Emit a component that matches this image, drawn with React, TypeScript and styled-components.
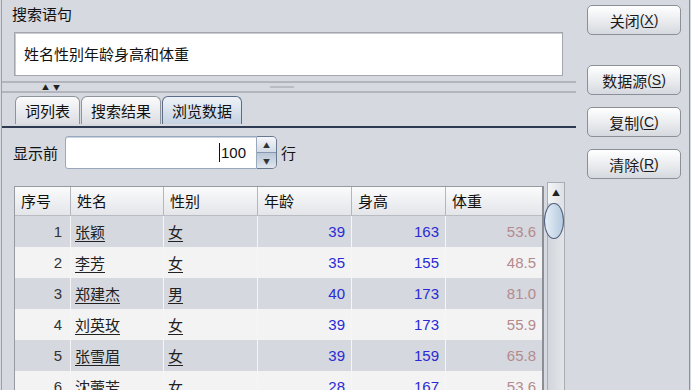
import React from 'react';
import styled, { createGlobalStyle } from 'styled-components';

const cjk = `"Noto Sans CJK SC", "Liberation Sans", sans-serif`;
const latin = `"Liberation Sans", "Noto Sans CJK SC", sans-serif`;

const GlobalStyle = createGlobalStyle`
  html, body {
    margin: 0;
    padding: 0;
    background: #d6d9df;
  }
  body {
    font-family: ${cjk};
    color: #111;
  }
`;

type Person = {
  id: number;
  name: string;
  sex: string;
  age: number;
  height: number;
  weight: string;
};

const rows: Person[] = [
  { id: 1, name: '张颖', sex: '女', age: 39, height: 163, weight: '53.6' },
  { id: 2, name: '李芳', sex: '女', age: 35, height: 155, weight: '48.5' },
  { id: 3, name: '郑建杰', sex: '男', age: 40, height: 173, weight: '81.0' },
  { id: 4, name: '刘英玫', sex: '女', age: 39, height: 173, weight: '55.9' },
  { id: 5, name: '张雪眉', sex: '女', age: 39, height: 159, weight: '65.8' },
  { id: 6, name: '沈蕾芳', sex: '女', age: 28, height: 167, weight: '53.6' },
];

const columns = ['序号', '姓名', '性别', '年龄', '身高', '体重'];

const App = () => {
  return (
    <Frame>
      <GlobalStyle />
      <LeftPane>
        <SearchSection>
          <SectionLabel>搜索语句</SectionLabel>
          <QueryBox>姓名性别年龄身高和体重</QueryBox>
        </SearchSection>
        <Splitter>
          <SplitArrows>
            <span>▲</span>
            <span>▼</span>
          </SplitArrows>
          <SplitGrip />
        </Splitter>
        <TabBar>
          <Tab>词列表</Tab>
          <Tab>搜索结果</Tab>
          <Tab $active>浏览数据</Tab>
        </TabBar>
        <TabRule />
        <TabBody>
          <SpinnerRow>
            <FieldLabel>显示前</FieldLabel>
            <SpinnerField>
              <SpinnerValue>
                <Caret />
                100
              </SpinnerValue>
            </SpinnerField>
            <SpinnerButtons>
              <SpinButton>▲</SpinButton>
              <SpinButton $down>▼</SpinButton>
            </SpinnerButtons>
            <FieldLabel>行</FieldLabel>
          </SpinnerRow>
          <TableArea>
            <DataTable>
              <HeaderRow>
                {columns.map((c) => (
                  <HeaderCell key={c}>{c}</HeaderCell>
                ))}
              </HeaderRow>
              {rows.map((r, i) => (
                <DataRow key={r.id} $odd={i % 2 === 0}>
                  <NumCell>{r.id}</NumCell>
                  <LinkCell>{r.name}</LinkCell>
                  <LinkCell>{r.sex}</LinkCell>
                  <NumCell $color="#2a2ad6">{r.age}</NumCell>
                  <NumCell $color="#2a2ad6">{r.height}</NumCell>
                  <NumCell $color="#b48a8e">{r.weight}</NumCell>
                </DataRow>
              ))}
            </DataTable>
            <ScrollBar>
              <ScrollUp>▲</ScrollUp>
              <ScrollThumb />
            </ScrollBar>
          </TableArea>
        </TabBody>
      </LeftPane>
      <RightPane>
        <ActionButton>
          关闭<Key>(<u>X</u>)</Key>
        </ActionButton>
        <ActionButton $gap={30}>
          数据源<Key>(<u>S</u>)</Key>
        </ActionButton>
        <ActionButton>
          复制<Key>(<u>C</u>)</Key>
        </ActionButton>
        <ActionButton>
          清除<Key>(<u>R</u>)</Key>
        </ActionButton>
      </RightPane>
    </Frame>
  );
};

export default App;

const Frame = styled.div`
  display: flex;
  width: 691px;
  height: 390px;
  overflow: hidden;
  background: #d6d9df;
`;

const LeftPane = styled.div`
  width: 574px;
  margin-left: 1px;
  border-left: 1px solid #9c9fa6;
  display: flex;
  flex-direction: column;
`;

const SearchSection = styled.div`
  padding: 5px 0 0 10px;
`;

const SectionLabel = styled.div`
  font-size: 15px;
  line-height: 18px;
`;

const QueryBox = styled.div`
  margin-top: 9px;
  margin-left: 2px;
  width: 549px;
  height: 44px;
  box-sizing: border-box;
  background: #ffffff;
  border: 1px solid #a3a6ad;
  box-shadow: inset 1px 1px 0 #c9cbd0;
  padding: 0 9px;
  font-size: 15px;
  line-height: 42px;
`;

const Splitter = styled.div`
  margin-top: 5px;
  height: 9px;
  border-top: 2px solid #b2b5bb;
  border-bottom: 2px solid #b2b5bb;
  display: flex;
  align-items: center;
`;

const SplitArrows = styled.div`
  display: flex;
  gap: 4px;
  margin-left: 40px;
  font-size: 7px;
  line-height: 8px;
  color: #222;
`;

const SplitGrip = styled.div`
  margin-left: 210px;
  width: 24px;
  height: 2px;
  background: #b9bcc2;
`;

const TabBar = styled.div`
  display: flex;
  gap: 1px;
  margin-top: 3px;
  padding-left: 13px;
  height: 28px;
  align-items: flex-end;
`;

const Tab = styled.div<{ $active?: boolean }>`
  height: 28px;
  box-sizing: border-box;
  padding: 0 9px;
  font-size: 15px;
  line-height: 27px;
  border: 1px solid ${(p) => (p.$active ? '#5b6c88' : '#8f939b')};
  border-bottom: none;
  border-radius: 6px 6px 0 0;
  background: ${(p) =>
    p.$active
      ? 'linear-gradient(#eef2f7, #c4d2e2)'
      : 'linear-gradient(#fbfbfc, #dcdee3)'};
`;

const TabRule = styled.div`
  height: 2px;
  margin-top: 2px;
  background: #bccbdd;
  border-top: 1px solid #2e3a52;
  border-bottom: 1px solid #2e3a52;
`;

const TabBody = styled.div`
  padding: 8px 0 0 11px;
  display: flex;
  flex-direction: column;
`;

const SpinnerRow = styled.div`
  display: flex;
  align-items: center;
  height: 33px;
`;

const FieldLabel = styled.span`
  font-size: 15px;
  margin-right: 7px;
  &:last-child {
    margin-left: 4px;
  }
`;

const SpinnerField = styled.div`
  width: 192px;
  height: 33px;
  box-sizing: border-box;
  background: #fff;
  border: 1px solid #9aa8bc;
  border-radius: 3px 0 0 3px;
  box-shadow: inset 0 1px 0 #c7d3e3;
  display: flex;
  align-items: center;
  justify-content: flex-end;
  padding-right: 10px;
`;

const SpinnerValue = styled.span`
  font-family: ${latin};
  font-size: 15px;
  display: flex;
  align-items: center;
`;

const Caret = styled.span`
  width: 1px;
  height: 19px;
  background: #111;
  margin-right: 1px;
`;

const SpinnerButtons = styled.div`
  width: 20px;
  height: 33px;
  box-sizing: border-box;
  border: 1px solid #69778f;
  border-left: none;
  border-radius: 0 5px 5px 0;
  display: flex;
  flex-direction: column;
  overflow: hidden;
`;

const SpinButton = styled.div<{ $down?: boolean }>`
  flex: 1;
  font-size: 7px;
  display: flex;
  align-items: center;
  justify-content: center;
  color: #333;
  background: ${(p) =>
    p.$down ? 'linear-gradient(#b8c6d8, #dfe6ef)' : 'linear-gradient(#f5f7fa, #d2dbe6)'};
  ${(p) => (p.$down ? 'border-top: 1px solid #8797ae;' : '')}
`;

const TableArea = styled.div`
  display: flex;
  align-items: flex-start;
  margin-top: 13px;
  margin-left: 1px;
`;

const DataTable = styled.div`
  width: 530px;
  box-sizing: border-box;
  border: 1px solid #979aa1;
  border-right: 2px solid #8b8e95;
  border-bottom: none;
  margin-top: 4px;
`;

const gridCols = '56px 93px 94px 94px 94px 96px';

const HeaderRow = styled.div`
  display: grid;
  grid-template-columns: ${gridCols};
  height: 28px;
  background: linear-gradient(#fbfbfc, #e3e5e9);
  border-bottom: 1px solid #b9bcc2;
`;

const HeaderCell = styled.div`
  font-size: 15px;
  line-height: 28px;
  padding-left: 6px;
  border-right: 1px solid #b3b6bc;
  &:last-child {
    border-right: none;
  }
`;

const DataRow = styled.div<{ $odd: boolean }>`
  display: grid;
  grid-template-columns: ${gridCols};
  height: 31px;
  background: ${(p) => (p.$odd ? '#d5d8de' : '#f3f3f4')};
`;

const Cell = styled.div`
  font-size: 15px;
  line-height: 31px;
  border-right: 1px solid #f6f6f7;
  white-space: nowrap;
  overflow: hidden;
  &:last-child {
    border-right: none;
  }
`;

const NumCell = styled(Cell)<{ $color?: string }>`
  font-family: ${latin};
  text-align: right;
  padding-right: 6px;
  color: ${(p) => p.$color || '#333'};
  &:first-child {
    padding-right: 8px;
  }
`;

const LinkCell = styled(Cell)`
  padding-left: 4px;
  text-decoration: underline;
  text-underline-offset: 3px;
  color: #222;
`;

const ScrollBar = styled.div`
  width: 18px;
  height: 220px;
  margin-left: 3px;
  box-sizing: border-box;
  border: 1px solid #a9acb2;
  background: linear-gradient(90deg, #d2d5db, #e3e5e9);
  display: flex;
  flex-direction: column;
  align-items: center;
`;

const ScrollUp = styled.div`
  height: 20px;
  width: 100%;
  font-size: 8px;
  line-height: 20px;
  text-align: center;
  color: #222;
  background: linear-gradient(90deg, #f4f5f7, #dde0e5);
`;

const ScrollThumb = styled.div`
  width: 20px;
  height: 36px;
  margin-left: -4px;
  box-sizing: border-box;
  border: 1.5px solid #4d5e7c;
  border-radius: 10px / 18px;
  background: linear-gradient(90deg, #e6eef7, #b6cadf);
`;

const RightPane = styled.div`
  flex: 1;
  display: flex;
  flex-direction: column;
  gap: 12px;
  padding: 5px 0 0 11px;
  border-right: 1px solid #8e9197;
  margin-right: 1px;
`;

const ActionButton = styled.button<{ $gap?: number }>`
  width: 94px;
  height: 30px;
  margin-top: ${(p) => (p.$gap ? p.$gap - 12 : 0)}px;
  border: 1px solid #8b8f97;
  border-radius: 5px;
  background: linear-gradient(#ffffff, #e9ebee 55%, #d5d8de);
  font-family: ${cjk};
  font-size: 15px;
  color: #1a1a1a;
  padding: 0;
  display: flex;
  align-items: center;
  justify-content: center;
`;

const Key = styled.span`
  font-family: ${latin};
  font-size: 14px;
  u {
    text-underline-offset: 2px;
  }
`;
